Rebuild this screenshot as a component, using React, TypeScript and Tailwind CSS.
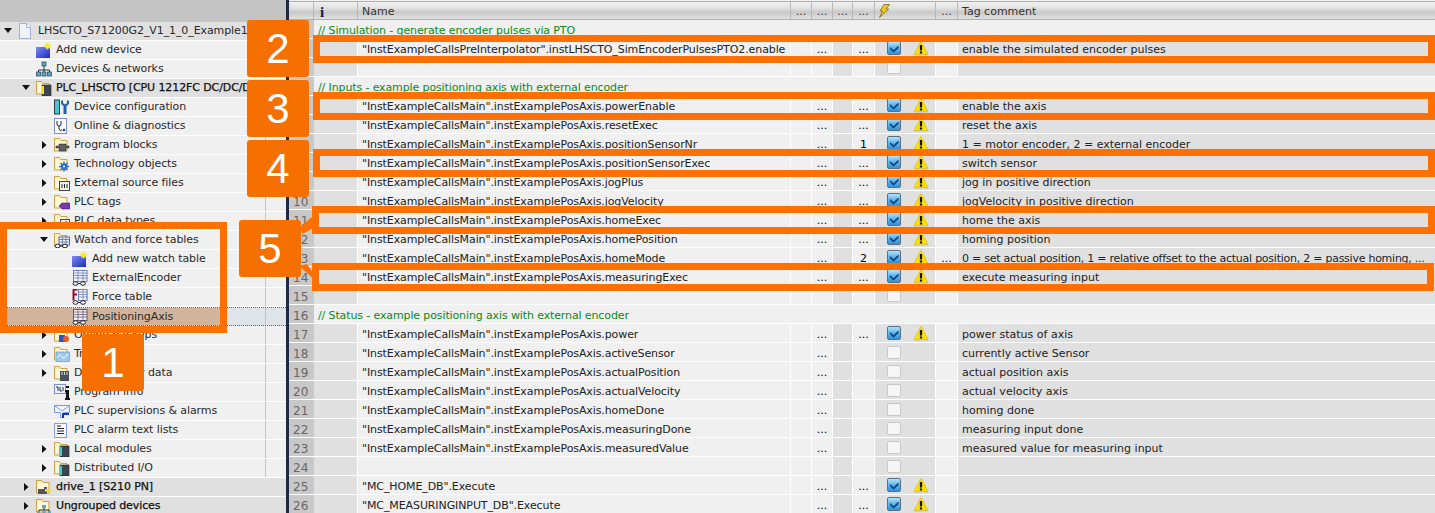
import React from "react";

const FONT = "[font-family:'DejaVu_Sans',sans-serif] text-[11px]";

// small icon drawings, all 16x16
const Folder = ({ children }: { children?: React.ReactNode }) => (
  <svg width="16" height="16" viewBox="0 0 16 16" className="shrink-0">
    <path d="M0.5 14V1.5h5l1.5 2h6v10.5z" fill="#fdf0b8" stroke="#c9a24a" />
    <path d="M2 4.5h10v8H2z" fill="#fff9dc" />
    {children}
  </svg>
);

const Glasses = () => (
  <g fill="#f4f6fb" stroke="#222" strokeWidth="1">
    <ellipse cx="3.5" cy="13.5" rx="2.5" ry="1.8" />
    <ellipse cx="11" cy="13.5" rx="2.5" ry="1.8" />
    <path d="M6 13.5h2.5" fill="none" />
  </g>
);

const Grid = ({ x = 1, color = "#6f80b8" }: { x?: number; color?: string }) => (
  <g stroke={color} strokeWidth="1" fill="none">
    <rect x={x + 0.5} y="0.5" width={14.5 - x} height="11" fill="#f2f4fb" />
    <path d={`M${x} 3h${15 - x}M${x} 5.5h${15 - x}M${x} 8h${15 - x}M${x + 5} 1v10M${x + 10} 1v10`} strokeWidth="0.8" />
  </g>
);

const AddIcon = () => (
  <svg width="16" height="16" viewBox="0 0 16 16" className="shrink-0">
    <defs>
      <linearGradient id="addBlue" x1="0" y1="0" x2="1" y2="1">
        <stop offset="0" stopColor="#7f8cf0" />
        <stop offset="1" stopColor="#1a2bc0" />
      </linearGradient>
    </defs>
    <rect x="0" y="5" width="14" height="11" fill="url(#addBlue)" />
    <path d="M11.5 0.5v7M8 4h7M9.3 1.8l4.4 4.4M13.7 1.8l-4.4 4.4" stroke="#f8ee20" strokeWidth="1.5" />
  </svg>
);

const ICONS: Record<string, React.ReactNode> = {
  page: (
    <svg width="14" height="16" viewBox="0 0 14 16" className="shrink-0">
      <path d="M1.5 0.5h7l4 4v11h-11z" fill="#eef2fb" stroke="#9fb2d8" />
      <path d="M8.5 0.5v4h4" fill="#fff" stroke="#9fb2d8" />
    </svg>
  ),
  add: <AddIcon />,
  network: (
    <svg width="16" height="16" viewBox="0 0 16 16" className="shrink-0">
      <path d="M8 5v4M2.5 11V9h11v2M8 9v2" stroke="#333" fill="none" />
      <rect x="6" y="1" width="4" height="4" fill="#5aa9c8" stroke="#245" strokeWidth="0.7" />
      <rect x="0.5" y="11" width="4" height="4" fill="#5aa9c8" stroke="#245" strokeWidth="0.7" />
      <rect x="6" y="11" width="4" height="4" fill="#5aa9c8" stroke="#245" strokeWidth="0.7" />
      <rect x="11.5" y="11" width="4" height="4" fill="#5aa9c8" stroke="#245" strokeWidth="0.7" />
    </svg>
  ),
  plc: (
    <Folder>
      <rect x="6" y="5" width="9" height="11" fill="#3c4650" stroke="#222" strokeWidth="0.6" />
      <rect x="5" y="6" width="3" height="8" fill="#f5e020" />
    </Folder>
  ),
  devconf: (
    <svg width="16" height="16" viewBox="0 0 16 16" className="shrink-0">
      <rect x="0.5" y="1" width="5" height="14" fill="#48c8c8" stroke="#335" />
      <path d="M9 1v3l2 1.5 2-1.5V1l2 1v3l-2.5 2v8h-3V7L7 5V2z" fill="#1f62b0" />
    </svg>
  ),
  diag: (
    <svg width="14" height="16" viewBox="0 0 14 16" className="shrink-0">
      <rect x="0.5" y="0.5" width="12" height="15" fill="#fbfcff" stroke="#7d8fcf" />
      <path d="M3 3v3a2 2 0 0 0 4 0V3M5 8v3a2 2 0 0 0 3 1" stroke="#223" fill="none" />
      <circle cx="10" cy="12" r="1.3" fill="#245" />
    </svg>
  ),
  blocks: (
    <Folder>
      <path d="M2 9h3V7h7v2h3v2h-3v3H5v-3H2z" fill="#5b6065" stroke="#222" strokeWidth="0.5" />
    </Folder>
  ),
  tech: (
    <Folder>
      <circle cx="10" cy="10.5" r="3.2" fill="#2a6fd0" />
      <path d="M10 5.5v10M5 10.5h10M6.5 7l7 7M13.5 7l-7 7" stroke="#2a6fd0" strokeWidth="1.4" />
      <circle cx="10" cy="10.5" r="1" fill="#fff" />
    </Folder>
  ),
  source: (
    <Folder>
      <rect x="5.5" y="6.5" width="10" height="9" fill="#f0f2f8" stroke="#444" />
      <path d="M8 9v4M10.5 9v4M13 9v4" stroke="#222" />
    </Folder>
  ),
  tags: (
    <Folder>
      <path d="M5 12l3-3h8v6H8z" fill="#7a35b0" stroke="#3a1560" strokeWidth="0.5" />
    </Folder>
  ),
  types: (
    <Folder>
      <rect x="6.5" y="6.5" width="9" height="9" fill="#eef" stroke="#446" />
      <path d="M9 9v4M12 8v5" stroke="#223" />
    </Folder>
  ),
  watchFolder: (
    <svg width="16" height="16" viewBox="0 0 16 16" className="shrink-0">
      <path d="M0.5 14V1.5h5l1.5 2h6v10.5z" fill="#fdf0b8" stroke="#c9a24a" />
      <g transform="translate(0 2)">
        <rect x="5" y="3" width="10.5" height="8" fill="#eef1fa" stroke="#5a6ea8" />
        <path d="M5 5.5h10M5 8h10M8.5 3v8M12 3v8" stroke="#5a6ea8" strokeWidth="0.8" />
      </g>
      <g transform="translate(0 0.5)"><Glasses /></g>
    </svg>
  ),
  watch: (
    <svg width="16" height="16" viewBox="0 0 16 16" className="shrink-0">
      <Grid />
      <Glasses />
    </svg>
  ),
  force: (
    <svg width="16" height="16" viewBox="0 0 16 16" className="shrink-0">
      <Grid x={6} />
      <path d="M1 0.5h4.5M1.5 0.5v11M1.5 5.5h3.5" stroke="#9c0a2c" strokeWidth="2" fill="none" />
      <Glasses />
    </svg>
  ),
  watchSel: (
    <svg width="16" height="16" viewBox="0 0 16 16" className="shrink-0">
      <Grid color="#6a5a70" />
      <Glasses />
    </svg>
  ),
  backup: (
    <Folder>
      <rect x="5" y="8" width="6" height="7" fill="#2a55b8" />
      <circle cx="12" cy="12" r="3" fill="#e85a20" />
    </Folder>
  ),
  traces: (
    <Folder>
      <rect x="2" y="6" width="13.5" height="9.5" fill="#9ecbe8" stroke="#5a90b8" strokeWidth="0.6" />
      <path d="M3 12c2-4 4-3 5-1s3 1 6-3" stroke="#fff" fill="none" />
    </Folder>
  ),
  proxy: (
    <Folder>
      <rect x="6" y="6" width="9" height="10" fill="#48525c" />
      <path d="M8 7v3M10.5 7v3M13 7v3" stroke="#ddd" />
    </Folder>
  ),
  info: (
    <svg width="16" height="16" viewBox="0 0 16 16" className="shrink-0">
      <rect x="0.5" y="0.5" width="11" height="9" fill="#eef3fb" stroke="#7d8fcf" />
      <path d="M2 3h2v4M6 3v4h2M9 3v4" stroke="#234" fill="none" />
      <path d="M12 2h3v2h-3zM11 6h4v8h2v2h-6v-2h1V8h-1z" fill="#111" />
    </svg>
  ),
  alarm: (
    <svg width="16" height="16" viewBox="0 0 16 16" className="shrink-0">
      <path d="M0.5 2.5h15v7h-6v5h-3v-5h-6z" fill="#f3f6fd" stroke="#7d9ae0" />
      <path d="M1 3l7 5 7-5" stroke="#7d9ae0" fill="none" />
      <path d="M9 15v-4h6" stroke="#1530d8" strokeWidth="2" fill="none" />
    </svg>
  ),
  list: (
    <svg width="14" height="16" viewBox="0 0 14 16" className="shrink-0">
      <rect x="0.5" y="1.5" width="12" height="14" fill="#f5f7fd" stroke="#8a9cd8" />
      <path d="M3 4h4M3 6.5h7M3 9h7M3 11.5h7" stroke="#222" />
    </svg>
  ),
  modules: (
    <Folder>
      <rect x="6" y="5" width="9" height="11" fill="#3c4650" stroke="#222" strokeWidth="0.6" />
      <rect x="5" y="6" width="3" height="9" fill="#48c8c8" />
    </Folder>
  ),
  drive: (
    <Folder>
      <path d="M2 10h6V8h3v7H2z" fill="#555" />
      <rect x="9" y="10" width="6" height="2.5" fill="#f5e020" />
    </Folder>
  ),
  ungrouped: (
    <Folder>
      <path d="M3 14v-2h10v2M8 10v2" stroke="#222" fill="none" />
      <rect x="6" y="7" width="4" height="3" fill="#5aa9c8" />
      <rect x="1" y="13" width="3" height="3" fill="#5aa9c8" />
      <rect x="6.5" y="13" width="3" height="3" fill="#5aa9c8" />
      <rect x="12" y="13" width="3" height="3" fill="#5aa9c8" />
    </Folder>
  ),
};

type TreeItem = {
  label: string;
  level: 0 | 1 | 2 | 3;
  icon: string;
  arrow?: "down" | "right";
  band?: boolean;
  strong?: boolean;
  selected?: boolean;
};

const TREE: TreeItem[] = [
  { label: "LHSCTO_S71200G2_V1_1_0_Example1", level: 0, icon: "page", arrow: "down", band: true },
  { label: "Add new device", level: 1, icon: "add" },
  { label: "Devices & networks", level: 1, icon: "network" },
  { label: "PLC_LHSCTO [CPU 1212FC DC/DC/DC]", level: 1, icon: "plc", arrow: "down", band: true, strong: true },
  { label: "Device configuration", level: 2, icon: "devconf" },
  { label: "Online & diagnostics", level: 2, icon: "diag" },
  { label: "Program blocks", level: 2, icon: "blocks", arrow: "right" },
  { label: "Technology objects", level: 2, icon: "tech", arrow: "right" },
  { label: "External source files", level: 2, icon: "source", arrow: "right" },
  { label: "PLC tags", level: 2, icon: "tags", arrow: "right" },
  { label: "PLC data types", level: 2, icon: "types", arrow: "right" },
  { label: "Watch and force tables", level: 2, icon: "watchFolder", arrow: "down" },
  { label: "Add new watch table", level: 3, icon: "add" },
  { label: "ExternalEncoder", level: 3, icon: "watch" },
  { label: "Force table", level: 3, icon: "force" },
  { label: "PositioningAxis", level: 3, icon: "watchSel", selected: true },
  { label: "Online backups", level: 2, icon: "backup", arrow: "right" },
  { label: "Traces", level: 2, icon: "traces", arrow: "right" },
  { label: "Device proxy data", level: 2, icon: "proxy", arrow: "right" },
  { label: "Program info", level: 2, icon: "info" },
  { label: "PLC supervisions & alarms", level: 2, icon: "alarm" },
  { label: "PLC alarm text lists", level: 2, icon: "list" },
  { label: "Local modules", level: 2, icon: "modules", arrow: "right" },
  { label: "Distributed I/O", level: 2, icon: "modules", arrow: "right" },
  { label: "drive_1 [S210 PN]", level: 1, icon: "drive", arrow: "right", band: true, strong: true },
  { label: "Ungrouped devices", level: 1, icon: "ungrouped", arrow: "right", band: true, strong: true },
];

const INDENT = ["pl-0", "pl-[18px]", "pl-[36px]", "pl-[54px]"];

function Arrow({ dir }: { dir: "down" | "right" }) {
  return (
    <svg width="18" height="10" viewBox="0 0 18 10" className="shrink-0">
      {dir === "down" ? <path d="M4 2h8l-4 5z" fill="#111" /> : <path d="M6 1l4.5 4L6 9z" fill="#111" />}
    </svg>
  );
}

function TreeRow({ item }: { item: TreeItem }) {
  const bg = item.selected ? "bg-[#dfe4e9]" : item.band ? "bg-[#e0e0e0]" : "bg-[#f0f0f0]";
  const edge = item.selected ? "border-y border-dotted border-[#666]" : "border-b border-white";
  return (
    <div className={`relative flex h-[19px] ${bg} ${edge}`}>
      {item.selected && <div className="absolute inset-y-0 left-0 w-[220px] bg-[#d2b49c]" />}
      <div className={`relative flex w-[265px] items-center overflow-hidden whitespace-nowrap ${INDENT[item.level]}`}>
        <div className="w-[18px] shrink-0">{item.arrow && <Arrow dir={item.arrow} />}</div>
        <div className="flex w-[20px] shrink-0 justify-start">{ICONS[item.icon]}</div>
        <span className={`pt-px tracking-[-0.1px] ${item.strong ? "text-[#111] [-webkit-text-stroke:0.25px_#111]" : "text-[#2a2a2a]"}`}>{item.label}</span>
      </div>
      <div className={`flex-1 ${item.band ? "" : "border-l border-[#c4c4c4]"}`} />
    </div>
  );
}

type TagRow = {
  note?: string;
  name?: string;
  c2?: string;
  c4?: string;
  c6?: string;
  on?: boolean;
  box?: boolean;
  comment?: string;
  tight?: boolean;
};

const MAIN = '"InstExampleCallsMain".instExamplePosAxis.';
const std = (name: string, comment: string, c4 = "..."): TagRow => ({
  name: MAIN + name,
  c2: "...",
  c4,
  on: true,
  box: true,
  comment,
});
const off = (name: string, comment: string): TagRow => ({ name: MAIN + name, c2: "...", box: true, comment });
const empty: TagRow = { box: true };

const ROWS: TagRow[] = [
  { note: "// Simulation - generate encoder pulses via PTO" },
  {
    name: '"InstExampleCallsPreInterpolator".instLHSCTO_SimEncoderPulsesPTO2.enable',
    c2: "...",
    c4: "...",
    on: true,
    box: true,
    comment: "enable the simulated encoder pulses",
  },
  empty,
  { note: "// Inputs - example positioning axis with external encoder" },
  std("powerEnable", "enable the axis"),
  std("resetExec", "reset the axis"),
  std("positionSensorNr", "1 = motor encoder, 2 = external encoder", "1"),
  std("positionSensorExec", "switch sensor"),
  std("jogPlus", "jog in positive direction"),
  std("jogVelocity", "jogVelocity in positive direction"),
  std("homeExec", "home the axis"),
  std("homePosition", "homing position"),
  {
    ...std("homeMode", "0 = set actual position, 1 = relative offset to the actual position, 2 = passive homing, ...", "2"),
    c6: "...",
    tight: true,
  },
  std("measuringExec", "execute measuring input"),
  empty,
  { note: "// Status - example positioning axis with external encoder" },
  std("power", "power status of axis"),
  off("activeSensor", "currently active Sensor"),
  off("actualPosition", "actual position axis"),
  off("actualVelocity", "actual velocity axis"),
  off("homeDone", "homing done"),
  off("measuringDone", "measuring input done"),
  off("measuredValue", "measured value for measuring input"),
  empty,
  { name: '"MC_HOME_DB".Execute', c2: "...", c4: "...", on: true, box: true },
  { name: '"MC_MEASURINGINPUT_DB".Execute', c2: "...", c4: "...", on: true, box: true },
];

function CheckBox({ on }: { on?: boolean }) {
  if (!on) return <div className="h-[13px] w-[14px] rounded-[2px] border border-[#c8c8c8] bg-[#f6f6f6]" />;
  return (
    <svg width="14" height="14" viewBox="0 0 14 14">
      <defs>
        <linearGradient id="checkBlue" x1="0" y1="0" x2="0" y2="1">
          <stop offset="0" stopColor="#bfe6fb" />
          <stop offset="0.5" stopColor="#5cb4ea" />
          <stop offset="1" stopColor="#2f8fd8" />
        </linearGradient>
      </defs>
      <rect x="0.5" y="0.5" width="13" height="13" rx="1.5" fill="url(#checkBlue)" stroke="#5b6f80" />
      <path d="M3 6l3.5 3.2L11.5 4.5v2.4L6.5 11.5 3 8.3z" fill="#0f3f80" />
    </svg>
  );
}

function Warn() {
  return (
    <svg width="16" height="15" viewBox="0 0 16 15">
      <path d="M8 0.5L15 13.5H1z" fill="#ffe000" stroke="#e6c800" />
      <path d="M1 14h14" stroke="#c4c4b8" />
      <path d="M6.9 4h2.2v5.5H6.9zM6.9 10.5h2.2v2H6.9z" fill="#111" />
    </svg>
  );
}

function Row({ row, n }: { row: TagRow; n: number }) {
  return (
    <div className="flex h-[19px] border-b border-white">
      <div className="w-[25px] bg-[#c8c8c8] pl-[4px] pt-[4px] text-[12px] leading-[14px] text-[#666]">{n}</div>
      {row.note ? (
        <div className="flex flex-1 items-center bg-[#f0f0f0] pl-[4px] pt-[4px] tracking-[-0.12px] text-[#0a8a1a]">{row.note}</div>
      ) : (
        <>
          <div className="w-[44px] border-r border-white bg-[#e0e0e0]" />
          <div className="flex w-[433px] items-center whitespace-nowrap border-r border-white bg-[#f0f0f0] pl-[4px] pt-[4px] tracking-[-0.1px] text-[#222]">{row.name}</div>
          <div className="w-[21px] border-r border-white bg-[#f0f0f0]" />
          <div className="flex w-[21px] items-center justify-center border-r border-white bg-[#f0f0f0] pt-[4px]">{row.c2}</div>
          <div className="w-[20px] border-r border-white bg-[#e0e0e0]" />
          <div className="flex w-[22px] items-center justify-center border-r border-white bg-[#f0f0f0] pt-[4px]">{row.c4}</div>
          <div className="flex w-[61px] items-center gap-[12px] border-r border-white bg-[#e0e0e0] pl-[12px]">
            {row.box && <CheckBox on={row.on} />}
            {row.on && <Warn />}
          </div>
          <div className="flex w-[22px] items-center justify-center border-r border-white bg-[#f0f0f0] pt-[4px]">{row.c6}</div>
          <div className={`flex flex-1 items-center overflow-hidden whitespace-nowrap bg-[#e0e0e0] pl-[4px] pt-[4px] text-[#222] ${row.tight ? "tracking-[-0.25px]" : ""}`}>{row.comment}</div>
        </>
      )}
    </div>
  );
}

const HEAD_BG = "bg-[linear-gradient(#f0f0f0,#e2e2e2_35%,#c9c9c9_60%,#e0e0e0)]";

function Header() {
  const cell = `flex items-center justify-center border-r border-[#b8b8b8] pt-[3px] ${HEAD_BG}`;
  return (
    <div className="flex h-[19px] border-y border-[#b0b0b0] text-[#333]">
      <div className={`w-[25px] ${cell}`} />
      <div className={`w-[44px] ${cell} justify-start pl-[6px]`}>
        <span className="[font-family:'Liberation_Serif',serif] text-[15px] font-bold text-[#0d1a50]">i</span>
      </div>
      <div className={`w-[433px] ${cell} justify-start pl-[4px]`}>Name</div>
      <div className={`w-[21px] ${cell}`}>...</div>
      <div className={`w-[21px] ${cell}`}>...</div>
      <div className={`w-[20px] ${cell}`}>...</div>
      <div className={`w-[22px] ${cell}`}>...</div>
      <div className={`w-[61px] ${cell} justify-start pb-[3px] pl-[3px]`}>
        <svg width="12" height="14" viewBox="0 0 12 14">
          <path d="M6 0.5h5.5L8 5h2.5L1.5 13.5 4.5 7H2z" fill="#f2c81e" stroke="#7a6418" strokeWidth="0.8" />
        </svg>
      </div>
      <div className={`w-[22px] ${cell}`}>...</div>
      <div className={`flex-1 ${HEAD_BG} flex items-center pl-[4px] pt-[3px]`}>Tag comment</div>
    </div>
  );
}

function Badge({ n, className }: { n: number; className: string }) {
  return (
    <div className={`absolute flex h-[57px] w-[62px] items-center justify-center rounded-[3px] bg-[#f57000] [font-family:'Liberation_Sans',sans-serif] text-[42px] leading-none text-white ${className}`}>
      {n}
    </div>
  );
}

const Frame = ({ className }: { className: string }) => (
  <div className={`absolute border-[7px] border-[#ff7000] ${className}`} />
);

export default function App() {
  return (
    <div className={`relative flex h-[513px] w-[1435px] overflow-hidden bg-[#f0f0f0] ${FONT}`}>
      {/* project tree */}
      <div className="w-[286px] shrink-0">
        <div className="h-[22px] bg-[#c4c4c4]" />
        {TREE.map((item) => (
          <TreeRow key={item.label} item={item} />
        ))}
      </div>
      <div className="w-[3px] shrink-0 bg-[#1f2a44]" />

      {/* watch table */}
      <div className="flex-1 pt-px">
        <Header />
        {ROWS.map((row, i) => (
          <Row key={i} row={row} n={i + 1} />
        ))}
      </div>

      {/* annotations */}
      <Frame className="left-0 top-[222px] h-[111px] w-[227px]" />
      <Frame className="left-[313px] top-[35px] h-[28px] w-[1122px]" />
      <Frame className="left-[313px] top-[92px] h-[28px] w-[1122px]" />
      <Frame className="left-[313px] top-[149px] h-[28px] w-[1122px]" />
      <Frame className="left-[312px] top-[206px] h-[28px] w-[1123px]" />
      <Frame className="left-[312px] top-[263px] h-[28px] w-[1122px]" />
      <svg className="absolute left-[295px] top-[210px]" width="24" height="72" viewBox="0 0 24 72">
        <path d="M4 18L18 6v12L8 24zM4 56l8-2 8 12v4z" fill="#ff7000" />
      </svg>
      <Badge n={1} className="left-[82px] top-[334px]" />
      <Badge n={2} className="left-[247px] top-[20px]" />
      <Badge n={3} className="left-[247px] top-[80px]" />
      <Badge n={4} className="left-[247px] top-[140px]" />
      <Badge n={5} className="left-[239px] top-[220px]" />
    </div>
  );
}
